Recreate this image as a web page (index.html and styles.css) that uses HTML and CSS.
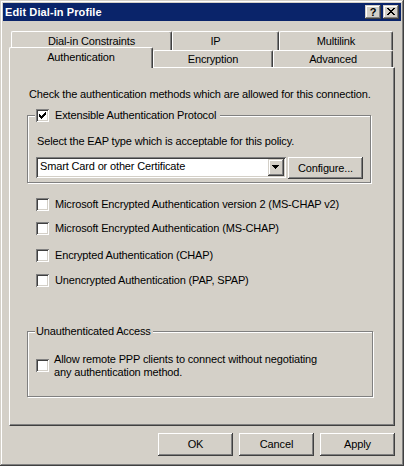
FILE: index.html
```
<!DOCTYPE html>
<html>
<head>
<meta charset="utf-8">
<title>Edit Dial-in Profile</title>
<link rel="stylesheet" href="styles.css">
</head>
<body>
<div class="window">
  <div class="titlebar">
    <span class="title">Edit Dial-in Profile</span>
    <div class="caption-btns">
      <div class="cbtn help">?</div>
      <div class="cbtn close"><svg width="16" height="14" viewBox="0 0 16 14"><path fill="#000" d="M4 3h2v1H4zM10 3h2v1h-2zM5 4h2v1H5zM9 4h2v1H9zM6 5h4v1H6zM7 6h2v1H7zM6 7h4v1H6zM5 8h2v1H5zM9 8h2v1H9zM4 9h2v1H4zM10 9h2v1h-2z"/></svg></div>
    </div>
  </div>

  <div class="tabs">
    <div class="tabrow back">
      <div class="tab w161">Dial-in Constraints</div>
      <div class="tab w107 ip">IP</div>
      <div class="tab w114">Multilink</div>
    </div>
    <div class="tabrow front">
      <div class="tab selected">Authentication</div>
      <div class="tab w120">Encryption</div>
      <div class="tab w120">Advanced</div>
    </div>
  </div>

  <div class="panel">
    <p class="intro">Check the authentication methods which are allowed for this connection.</p>

    <div class="group eap">
      <div class="gtitle">
        <span class="cb"><svg width="13" height="13" viewBox="0 0 13 13"><path fill="#000" d="M9 3h1v1H9zM8 4h2v1H8zM3 5h1v1H3zM7 5h3v1H7zM3 6h2v1H3zM6 6h3v1H6zM3 7h5v1H3zM4 8h3v1H4zM5 9h1v1H5z"/></svg></span>
        <span>Extensible Authentication Protocol</span>
      </div>
      <p class="gtext">Select the EAP type which is acceptable for this policy.</p>
      <div class="combo-row">
        <div class="combo">
          <span class="combo-text">Smart Card or other Certificate</span>
          <span class="combo-arrow"><svg width="16" height="17" viewBox="0 0 16 17"><path fill="#000" d="M4 6h7v1H4zM5 7h5v1H5zM6 8h3v1H6zM7 9h1v1H7z"/></svg></span>
        </div>
        <button class="btn configure">Configure...</button>
      </div>
    </div>

    <div class="opt o1"><span class="cb"></span><span>Microsoft Encrypted Authentication version 2 (MS-CHAP v2)</span></div>
    <div class="opt o2"><span class="cb"></span><span>Microsoft Encrypted Authentication (MS-CHAP)</span></div>
    <div class="opt o3"><span class="cb"></span><span>Encrypted Authentication (CHAP)</span></div>
    <div class="opt o4"><span class="cb"></span><span>Unencrypted Authentication (PAP, SPAP)</span></div>

    <div class="group unauth">
      <div class="gtitle">Unauthenticated Access</div>
      <div class="opt"><span class="cb"></span><span>Allow remote PPP clients to connect without negotiating<br>any authentication method.</span></div>
    </div>
  </div>

  <div class="buttons">
    <button class="btn">OK</button>
    <button class="btn">Cancel</button>
    <button class="btn">Apply</button>
  </div>
</div>
</body>
</html>
```

FILE: styles.css
```
* { box-sizing: border-box; }

body {
  margin: 0;
  background: #d4d0c8;
  font-family: "Liberation Sans", Arial, sans-serif;
  font-size: 11px;
  line-height: 13px;
  letter-spacing: -0.15px;
  color: #000;
}

p { margin: 0; }

.window {
  width: 404px;
  height: 466px;
  padding: 3px;
  background: #d4d0c8;
  box-shadow: inset -1px -1px #404040, inset 1px 1px #d4d0c8, inset -2px -2px #808080, inset 2px 2px #fff;
}

.titlebar {
  height: 18px;
  background: #0a246a;
  color: #fff;
  display: flex;
  align-items: center;
  justify-content: space-between;
  padding: 0 2px;
}

.title { font-weight: bold; white-space: nowrap; letter-spacing: 0.1px; }

.caption-btns { display: flex; gap: 2px; }

.cbtn {
  width: 16px;
  height: 14px;
  background: #d4d0c8;
  box-shadow: inset -1px -1px #404040, inset 1px 1px #d4d0c8, inset -2px -2px #808080, inset 2px 2px #fff;
  color: #000;
  font-weight: bold;
  text-align: center;
  line-height: 14px;
  letter-spacing: 0;
}

.cbtn svg, .cb svg, .combo-arrow svg { display: block; }

/* tabs */
.tabs { margin: 10px 0 0 6px; width: 386px; }

.tabrow { display: flex; }
.tabrow.back { height: 19px; padding-left: 2px; }
.tabrow.front { height: 17px; align-items: flex-end; }

.tab {
  flex: none;
  height: 19px;
  border-top: 1px solid #fff;
  border-left: 1px solid #fff;
  border-right: 1px solid #404040;
  border-radius: 2px 2px 0 0;
  box-shadow: inset -1px 0 #808080;
  background: #d4d0c8;
  text-align: center;
  white-space: nowrap;
  padding-top: 3px;
}

.w161 { width: 161px; }
.w107 { width: 107px; }
.w114 { width: 114px; }
.w120 { width: 120px; }
.ip { padding-right: 20px; }

.front .tab { height: 17px; padding-top: 2px; }

.front .tab.selected {
  width: 144px;
  height: 21px;
  margin-bottom: -1px;
  padding-top: 3px;
  position: relative;
  z-index: 1;
}

/* panel */
.panel {
  margin-left: 6px;
  width: 386px;
  height: 359px;
  border: 1px solid;
  border-color: #fff #404040 #404040 #fff;
  box-shadow: inset -1px -1px #808080;
  padding-left: 17px;
}

.intro { margin: 20px 0 0 2px; white-space: nowrap; }

.group {
  border: 1px solid #808080;
  box-shadow: inset 1px 1px #fff, 1px 1px #fff;
}

.group.eap { width: 344px; margin-top: 14px; padding-bottom: 3px; }
.group.unauth { width: 346px; margin-top: 44px; padding-bottom: 17px; }

.gtitle {
  display: flex;
  align-items: center;
  gap: 6px;
  width: max-content;
  height: 13px;
  margin: -7px 0 0 7px;
  padding: 0 4px 0 1px;
  background: #d4d0c8;
  white-space: nowrap;
}

.unauth .gtitle { padding: 0 2px 0 1px; }

.gtext { margin: 13px 0 0 9px; white-space: nowrap; }

.combo-row {
  display: flex;
  align-items: flex-start;
  gap: 2px;
  margin: 9px 0 0 8px;
}

.combo {
  width: 250px;
  height: 21px;
  padding: 2px;
  background: #fff;
  display: flex;
  box-shadow: inset 1px 1px #808080, inset -1px -1px #fff, inset 2px 2px #404040, inset -2px -2px #d4d0c8;
}

.combo-text { flex: 1; padding: 1px 0 0 2px; white-space: nowrap; }

.combo-arrow {
  flex: none;
  width: 16px;
  height: 17px;
  background: #d4d0c8;
  box-shadow: inset -1px -1px #404040, inset 1px 1px #d4d0c8, inset -2px -2px #808080, inset 2px 2px #fff;
}

.btn {
  font: inherit;
  letter-spacing: inherit;
  color: #000;
  border: none;
  margin: 0;
  padding: 0;
  width: 75px;
  height: 23px;
  flex: none;
  background: #d4d0c8;
  box-shadow: inset -1px -1px #404040, inset 1px 1px #fff, inset -2px -2px #808080, inset 2px 2px #d4d0c8;
  text-align: center;
  line-height: 13px;
}

.btn.configure { height: 22px; }

/* checkbox rows */
.opt {
  display: flex;
  align-items: flex-start;
  gap: 6px;
  margin-left: 9px;
  white-space: nowrap;
}

.o1 { margin-top: 15px; }
.o2 { margin-top: 11px; }
.o3 { margin-top: 14px; }
.o4 { margin-top: 12px; }

.unauth .opt { margin: 15px 0 0 8px; gap: 5px; }
.unauth .opt .cb { margin-top: 6px; }

.cb {
  flex: none;
  width: 13px;
  height: 13px;
  background: #fff;
  box-shadow: inset 1px 1px #808080, inset -1px -1px #fff, inset 2px 2px #404040, inset -2px -2px #d4d0c8;
}

.buttons {
  display: flex;
  justify-content: flex-end;
  gap: 6px;
  margin-top: 7px;
  padding-right: 6px;
}
```
